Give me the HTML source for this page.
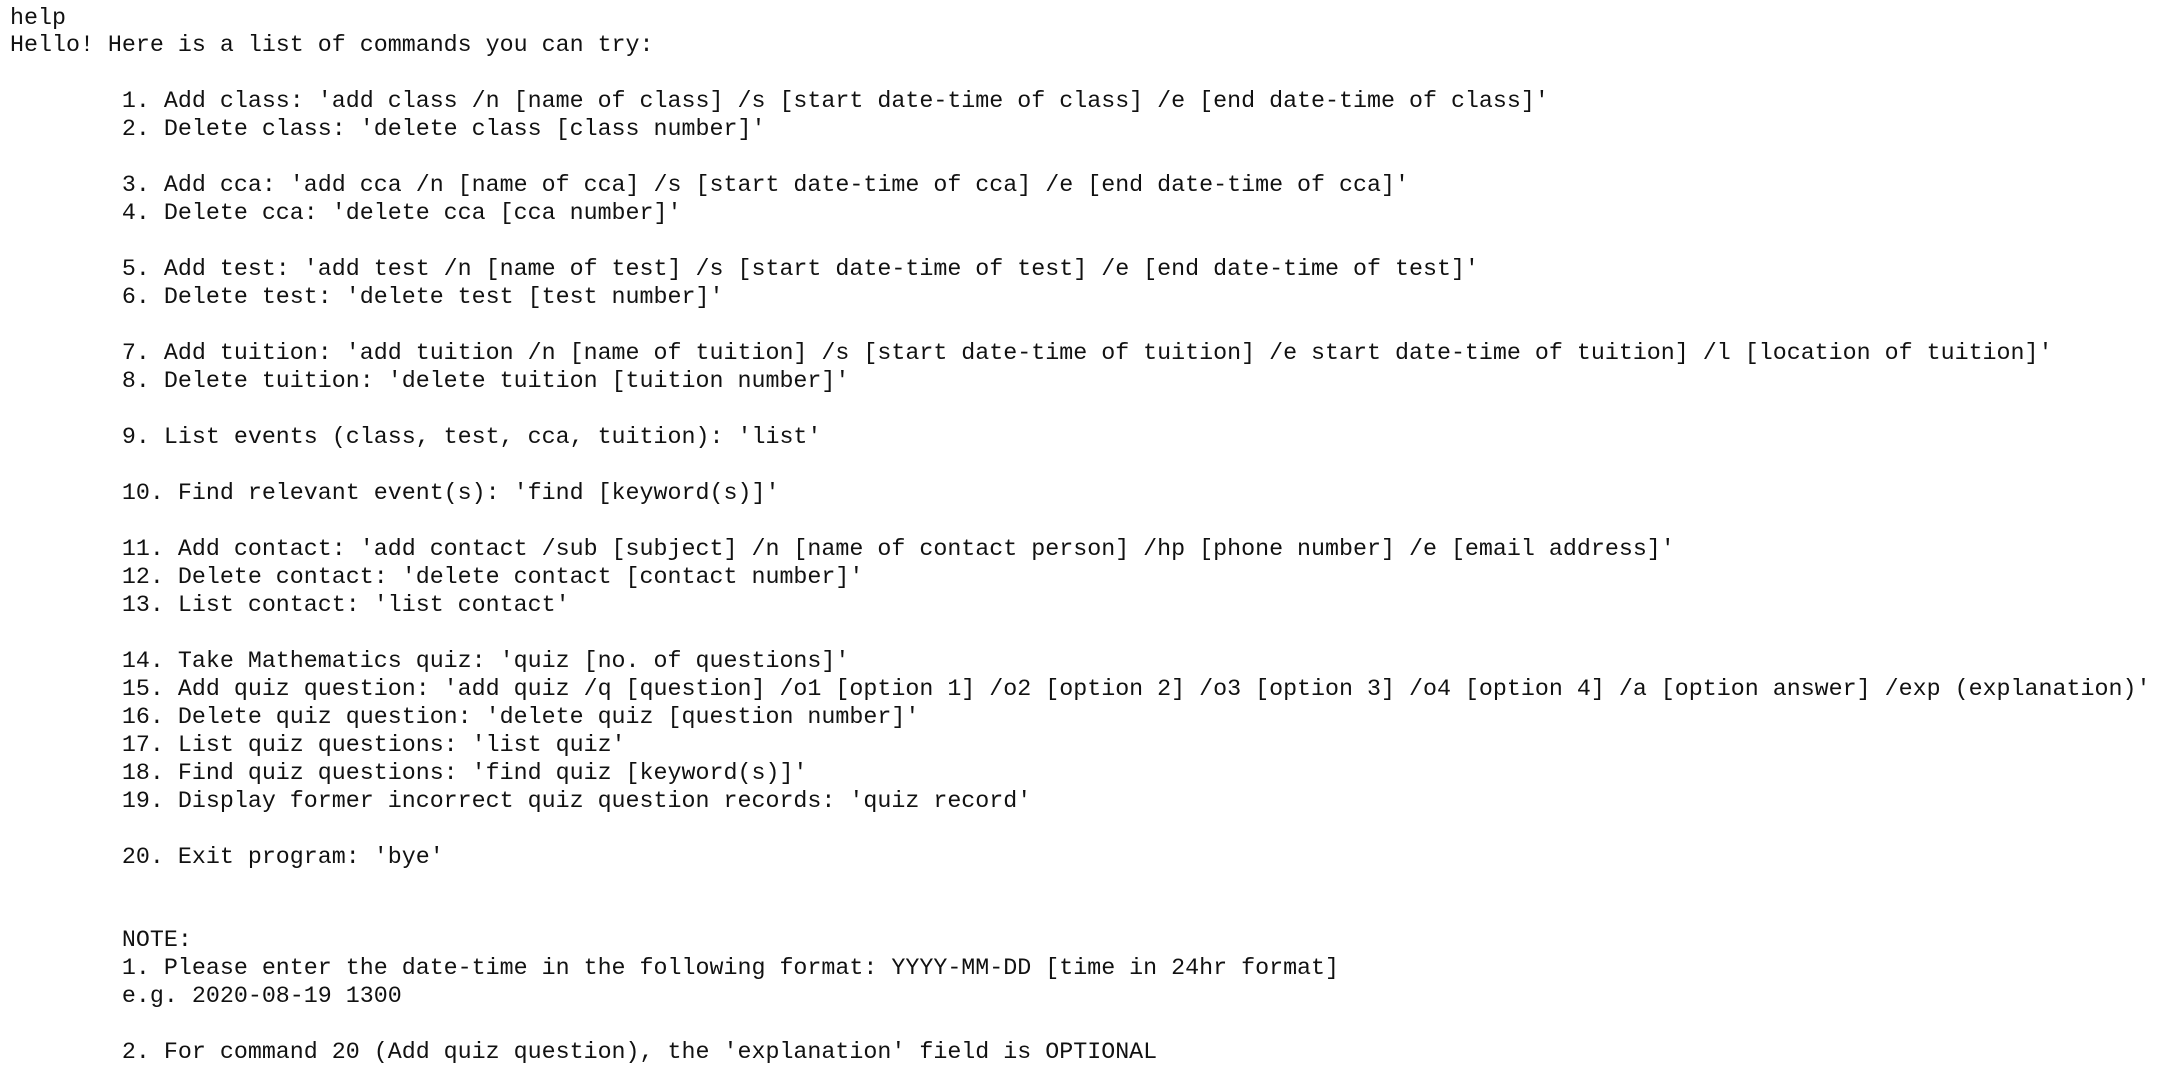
<!DOCTYPE html>
<html><head><meta charset="utf-8"><style>
html,body{margin:0;background:#fff;width:2172px;height:1074px;overflow:hidden}
pre{margin:0;padding:5.5px 0 0 10px;font-family:"Liberation Mono",monospace;font-size:23.32px;line-height:27.97px;color:#111;white-space:pre}
</style></head><body><pre>help
Hello! Here is a list of commands you can try:

        1. Add class: 'add class /n [name of class] /s [start date-time of class] /e [end date-time of class]'
        2. Delete class: 'delete class [class number]'

        3. Add cca: 'add cca /n [name of cca] /s [start date-time of cca] /e [end date-time of cca]'
        4. Delete cca: 'delete cca [cca number]'

        5. Add test: 'add test /n [name of test] /s [start date-time of test] /e [end date-time of test]'
        6. Delete test: 'delete test [test number]'

        7. Add tuition: 'add tuition /n [name of tuition] /s [start date-time of tuition] /e start date-time of tuition] /l [location of tuition]'
        8. Delete tuition: 'delete tuition [tuition number]'

        9. List events (class, test, cca, tuition): 'list'

        10. Find relevant event(s): 'find [keyword(s)]'

        11. Add contact: 'add contact /sub [subject] /n [name of contact person] /hp [phone number] /e [email address]'
        12. Delete contact: 'delete contact [contact number]'
        13. List contact: 'list contact'

        14. Take Mathematics quiz: 'quiz [no. of questions]'
        15. Add quiz question: 'add quiz /q [question] /o1 [option 1] /o2 [option 2] /o3 [option 3] /o4 [option 4] /a [option answer] /exp (explanation)'
        16. Delete quiz question: 'delete quiz [question number]'
        17. List quiz questions: 'list quiz'
        18. Find quiz questions: 'find quiz [keyword(s)]'
        19. Display former incorrect quiz question records: 'quiz record'

        20. Exit program: 'bye'


        NOTE:
        1. Please enter the date-time in the following format: YYYY-MM-DD [time in 24hr format]
        e.g. 2020-08-19 1300

        2. For command 20 (Add quiz question), the 'explanation' field is OPTIONAL
</pre></body></html>
